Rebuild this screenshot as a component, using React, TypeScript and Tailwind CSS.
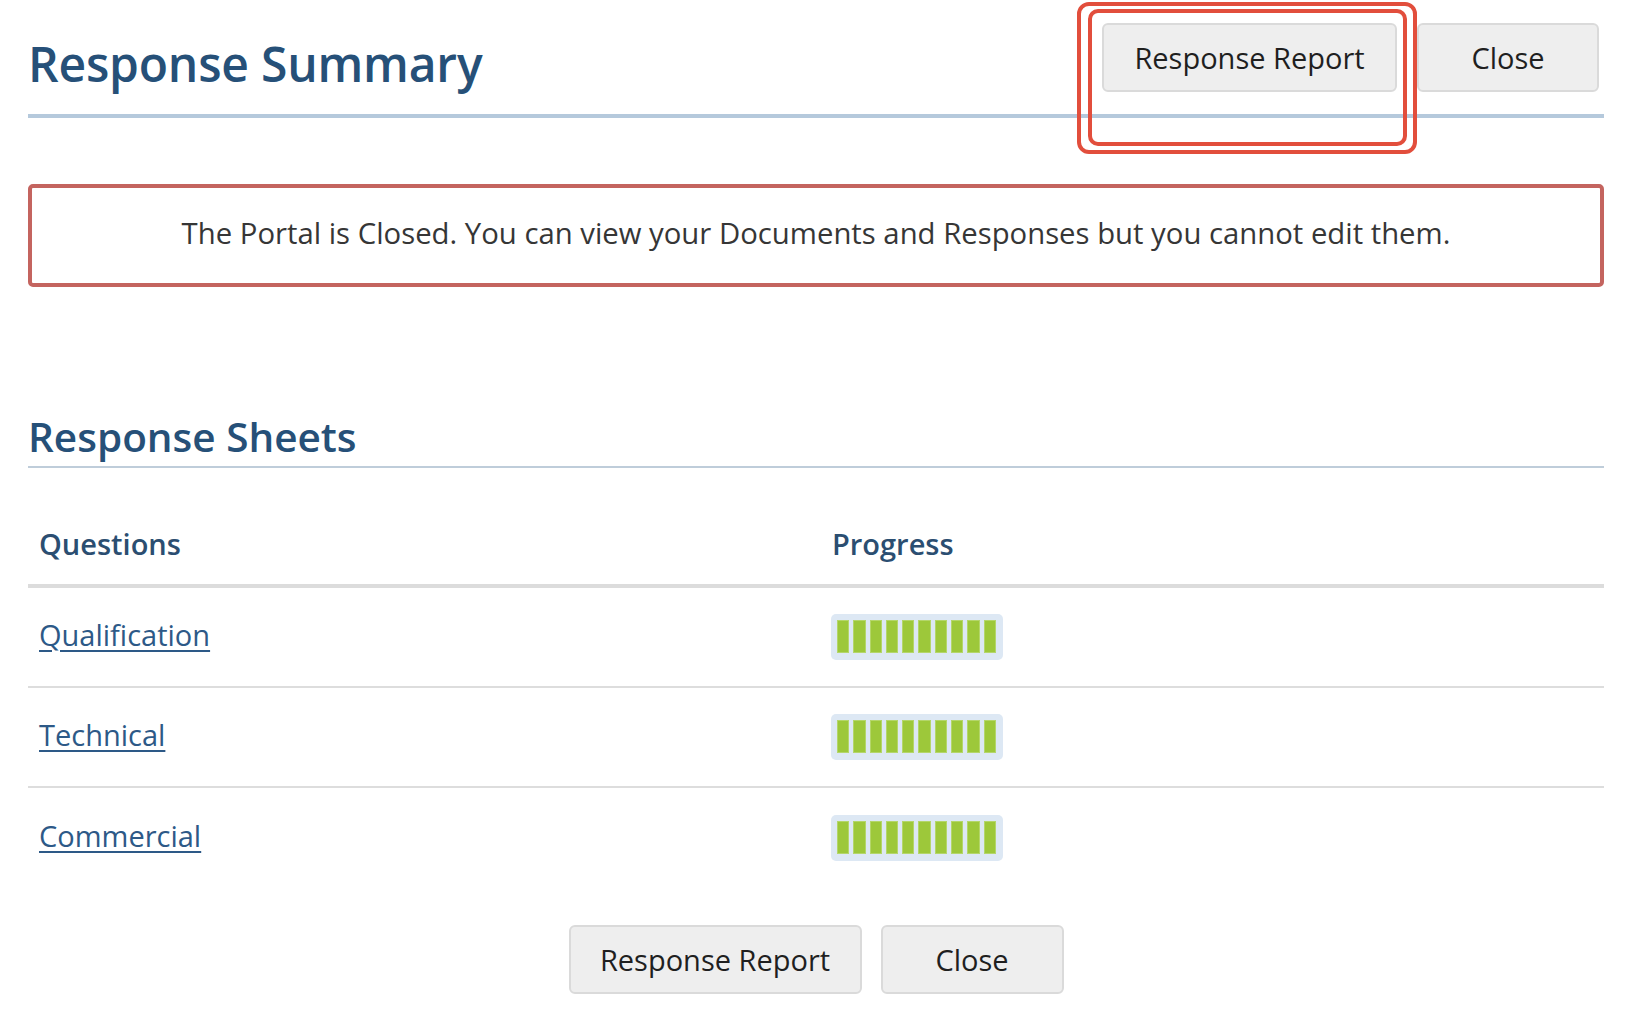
import React from "react";

const sheets = ["Qualification", "Technical", "Commercial"];

function Button({ label, width }: { label: string; width: string }) {
  return (
    <button
      className={`${width} h-[69px] rounded-[6px] border-2 border-[#dadada] bg-[#eeeeee] text-[29px] leading-none text-[#1f1f1f]`}
    >
      {label}
    </button>
  );
}

function ProgressBar({ filled }: { filled: number }) {
  return (
    <div className="flex gap-[4px] rounded-[5px] bg-[#dde8f4] pl-[6px] pr-[7px] pt-[6px] pb-[7px]">
      {Array.from({ length: 10 }).map((_, i) => (
        <div
          key={i}
          className={`h-[33px] w-[12.3px] border border-[#b4d66a] ${
            i < filled ? "bg-[#9dc83a]" : "bg-transparent"
          }`}
        />
      ))}
    </div>
  );
}

export default function App() {
  return (
    <div
      className="relative min-h-[1028px] bg-white pl-[28px] pr-[21px]"
      style={{ fontFamily: '"Open Sans", "Noto Sans", sans-serif' }}
    >
      {/* header */}
      <div className="flex h-[118px] items-start justify-between border-b-4 border-[#b5c9dc] pt-[23px]">
        <h1 className="mt-[12px] text-[48px] font-semibold leading-[58px] tracking-[-0.2px] text-[#265078]">
          Response Summary
        </h1>
        <div className="mr-[5px] flex gap-[20px]">
          <Button label="Response Report" width="w-[295px]" />
          <Button label="Close" width="w-[182px]" />
        </div>
      </div>

      {/* notice */}
      <div className="mt-[66px] flex h-[103px] items-center justify-center rounded-[5px] border-4 border-[#c4645f] pb-[4px]">
        <p className="text-[29.3px] text-[#363636]">
          The Portal is Closed. You can view your Documents and Responses but you cannot edit them.
        </p>
      </div>

      {/* response sheets */}
      <h2 className="mt-[126px] border-b-2 border-[#bfcdda] pb-[5px] text-[40.5px] font-semibold leading-[48px] text-[#265078]">
        Response Sheets
      </h2>

      <div>
        <div className="flex h-[120px] items-end border-b-4 border-[#dcdcdc] pb-[19px] text-[29px] font-semibold leading-[43px] text-[#2b4e71]">
          <div className="w-1/2 pl-[11px]">Questions</div>
          <div className="w-1/2 pl-[16px]">Progress</div>
        </div>
        {sheets.map((s, i) => (
          <div
            key={s}
            className={`flex h-[100px] items-center ${
              i < sheets.length - 1 ? "border-b-2 border-[#dddddd]" : ""
            }`}
          >
            <div className="mb-[6px] w-1/2 pl-[11px]">
              <a
                href="#"
                className="text-[29px] leading-[43px] text-[#2d5987] underline decoration-[1.5px] underline-offset-[4px]"
              >
                {s}
              </a>
            </div>
            <div className="w-1/2 pl-[15px]">
              <div className="inline-flex">
                <ProgressBar filled={10} />
              </div>
            </div>
          </div>
        ))}
      </div>

      {/* bottom actions */}
      <div className="mt-[37px] flex justify-center gap-[19px]">
        <Button label="Response Report" width="w-[293px]" />
        <Button label="Close" width="w-[183px]" />
      </div>

      {/* annotation highlight */}
      <div className="pointer-events-none absolute left-[1077px] top-[2px] h-[152px] w-[340px] rounded-[12px] border-4 border-[#e24e3c]" />
      <div className="pointer-events-none absolute left-[1088px] top-[9px] h-[137px] w-[319px] rounded-[10px] border-4 border-[#e24e3c]" />
    </div>
  );
}
